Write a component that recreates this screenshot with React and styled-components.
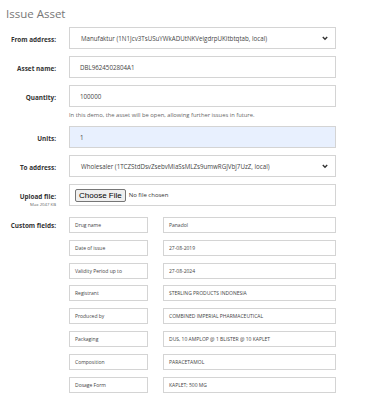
import styled, { createGlobalStyle } from "styled-components";

const GlobalStyle = createGlobalStyle`
  body {
    margin: 0;
    background: #fff;
    font-family: "Open Sans", "Liberation Sans", sans-serif;
    color: #444;
  }
`;

const customFields = [
  ["Drug name", "Panadol"],
  ["Date of issue", "27-08-2019"],
  ["Validity Period up to", "27-08-2024"],
  ["Registrant", "STERLING PRODUCTS INDONESIA"],
  ["Produced by", "COMBINED IMPERIAL PHARMACEUTICAL"],
  ["Packaging", "DUS, 10 AMPLOP @ 1 BLISTER @ 10 KAPLET"],
  ["Composition", "PARACETAMOL"],
  ["Dosage Form", "KAPLET; 500 MG"],
];

const Chevron = () => (
  <svg width="6" height="5" viewBox="0 0 6 5">
    <path d="M0.8 1 L3 3.3 L5.2 1" fill="none" stroke="#333" strokeWidth="1.4" />
  </svg>
);

const App = () => {
  return (
    <>
      <GlobalStyle />
      <Page>
        <Title>Issue Asset</Title>
        <Form>
          <Label>From address:</Label>
          <Field>
            <Box $pad="11px">
              <span>Manufaktur (1N1Jcv3TsUSuYWkADUtNKVeigdrpUKitbtqtab, local)</span>
              <Chevron />
            </Box>
          </Field>

          <Label>Asset name:</Label>
          <Field>
            <Box>DBL9624502804A1</Box>
          </Field>

          <Label>Quantity:</Label>
          <Field>
            <Box>100000</Box>
            <Help>In this demo, the asset will be open, allowing further issues in future.</Help>
          </Field>

          <Label>Units:</Label>
          <Field>
            <Box $filled>1</Box>
          </Field>

          <Label>To address:</Label>
          <Field>
            <Box $pad="11px">
              <span>Wholesaler (1TCZStdDsvZsebvMiaSsMLZs9umwRGJVbj7UzZ, local)</span>
              <Chevron />
            </Box>
          </Field>

          <Label>
            Upload file:
            <Small>Max 2047 KB</Small>
          </Label>
          <Field>
            <Box $pad="5px">
              <FileButton>Choose File</FileButton>
              <FileText>No file chosen</FileText>
            </Box>
          </Field>

          <Label $top="7px">Custom fields:</Label>
          <Field>
            <Custom>
              {customFields.map(([k, v]) => (
                <CustomRow key={k}>
                  <CellBox>{k}</CellBox>
                  <CellBox>{v}</CellBox>
                </CustomRow>
              ))}
            </Custom>
          </Field>
        </Form>
      </Page>
    </>
  );
};

export default App;

const Page = styled.div`
  width: 372px;
  height: 400px;
  padding: 7px 0 0 6px;
  box-sizing: border-box;
  overflow: hidden;
`;

const Title = styled.h2`
  margin: 0 0 6px;
  font-size: 11.5px;
  font-weight: 400;
  color: #777;
  line-height: 14px;
`;

const Form = styled.div`
  display: grid;
  grid-template-columns: 50px 267px;
  column-gap: 13px;
  row-gap: 7px;
`;

const Label = styled.div`
  text-align: right;
  font-weight: 700;
  font-size: 6.4px;
  color: #333;
  padding-top: ${(p) => p.$top || "8px"};
  line-height: 9px;
`;

const Small = styled.div`
  font-size: 4.3px;
  font-weight: 400;
  color: #666;
  line-height: 6px;
`;

const Field = styled.div`
  display: flex;
  flex-direction: column;
`;

const Box = styled.div`
  height: 22px;
  box-sizing: border-box;
  border: 1px solid #d4d4d4;
  background: ${(p) => (p.$filled ? "#e8f0fe" : "#fff")};
  display: flex;
  align-items: center;
  justify-content: space-between;
  padding: 0 7px 0 ${(p) => p.$pad || "10px"};
  font-size: 6.2px;
  color: #444;
  white-space: nowrap;
`;

const Help = styled.div`
  font-size: 5.8px;
  color: #666;
  margin-top: 4px;
  line-height: 8px;
`;

const FileButton = styled.span`
  font-family: "Liberation Sans", Arial, sans-serif;
  font-size: 8px;
  color: #000;
  background: #efefef;
  border: 1px solid #767676;
  border-radius: 2px;
  padding: 1px 3px;
  line-height: 9px;
`;

const FileText = styled.span`
  font-size: 6px;
  color: #333;
  margin-left: 3px;
  flex: 1;
`;

const Custom = styled.div`
  display: flex;
  flex-direction: column;
  gap: 6.8px;
  margin-top: 3px;
`;

const CustomRow = styled.div`
  display: grid;
  grid-template-columns: 79px 173px;
  column-gap: 15px;
`;

const CellBox = styled.div`
  height: 16px;
  box-sizing: border-box;
  border: 1px solid #d4d4d4;
  padding: 0 5px;
  display: flex;
  align-items: center;
  font-size: 5px;
  color: #444;
  white-space: nowrap;
  overflow: hidden;
`;
